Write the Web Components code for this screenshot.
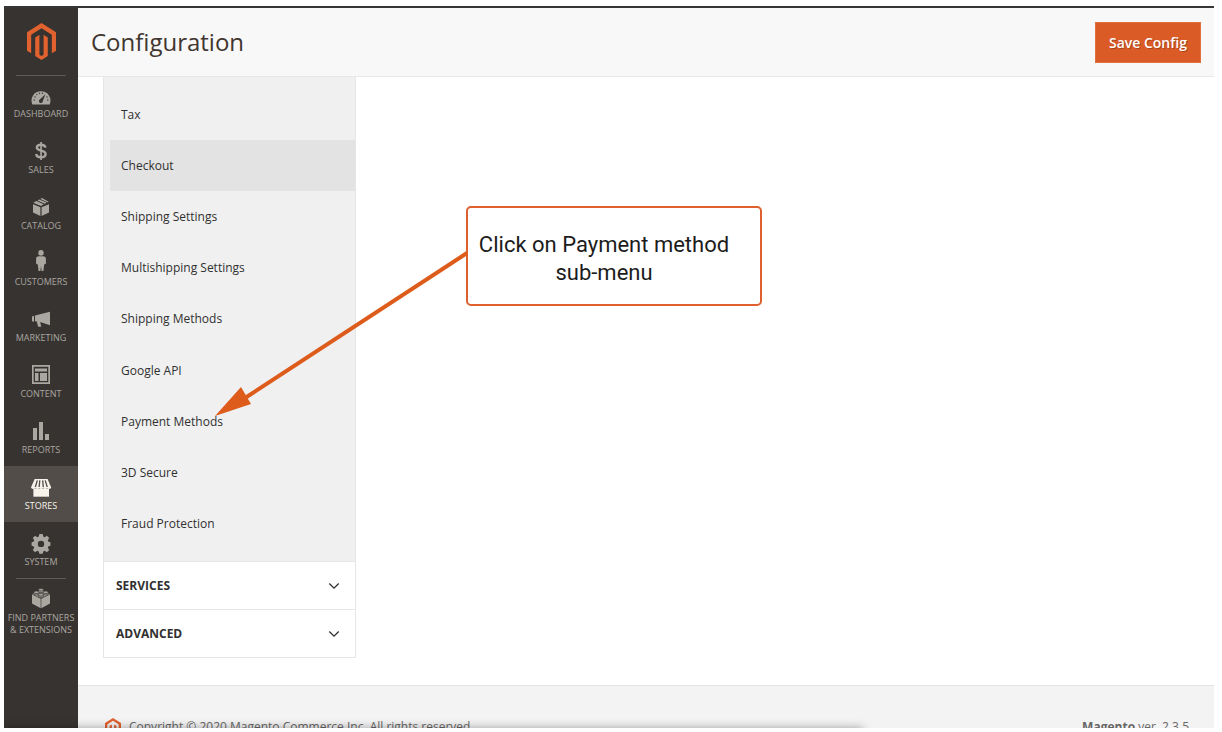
<!DOCTYPE html>
<html lang="en">
<head>
<meta charset="utf-8">
<title>Configuration / Magento Admin</title>
<style>
  body {
    margin: 0;
    background: #fff;
    font-family: "Open Sans", "Noto Sans", sans-serif;
    font-size: 12px;
    color: #303030;
  }
</style>
</head>
<body>
<admin-page>
  <side-bar slot="nav">
    <side-item icon="dashboard">Dashboard</side-item>
    <side-item icon="sales">Sales</side-item>
    <side-item icon="catalog">Catalog</side-item>
    <side-item icon="customers">Customers</side-item>
    <side-item icon="marketing">Marketing</side-item>
    <side-item icon="content">Content</side-item>
    <side-item icon="reports">Reports</side-item>
    <side-item icon="stores" active>Stores</side-item>
    <side-item icon="system">System</side-item>
    <side-item icon="partners" divided>Find Partners<br>&amp; Extensions</side-item>
  </side-bar>
  <page-header slot="header">Configuration</page-header>
  <config-menu>
    <config-link>Tax</config-link>
    <config-link active>Checkout</config-link>
    <config-link>Shipping Settings</config-link>
    <config-link>Multishipping Settings</config-link>
    <config-link>Shipping Methods</config-link>
    <config-link>Google API</config-link>
    <config-link>Payment Methods</config-link>
    <config-link>3D Secure</config-link>
    <config-link>Fraud Protection</config-link>
    <config-section slot="sections">Services</config-section>
    <config-section slot="sections">Advanced</config-section>
  </config-menu>
  <call-out slot="over">Click on Payment method sub-menu</call-out>
  <page-footer slot="footer"></page-footer>
</admin-page>

<script>
const LOGO = `<svg class="logo" viewBox="1.6 0 20.8 24" preserveAspectRatio="none" fill="currentColor" aria-hidden="true">
  <path d="M12 0l10.400 6v12l-3 1.700v-12L12 3.400 4.600 7.700v12l-3-1.700V6z"/>
  <path d="M10.500 7.700v12.900l1.500.8 1.500-.8V7.700l3 1.700v12L12 24l-4.500-2.600v-12z"/>
</svg>`;

const ICONS = {
  dashboard: `<path d="M1.300 19.500A9.500 9.500 0 1 1 18.700 19.500z"/>
    <g fill="#373330"><circle cx="3.200" cy="15" r=".7"/><circle cx="4" cy="12" r=".7"/><circle cx="5.900" cy="9.600" r=".7"/><circle cx="8.500" cy="8.200" r=".7"/><circle cx="11.400" cy="8.200" r=".7"/><circle cx="16" cy="12" r=".7"/><circle cx="16.800" cy="15" r=".7"/>
    <path d="M14.500 9.200l-2.600 6.600a2 2 0 1 1-2.900-1.600z"/></g>`,
  sales: `<path d="M14.400 6.600c-.3-2-1.800-2.900-4.400-2.900s-4.200 1.100-4.200 2.900c0 4 8.800 2.200 8.800 6.500 0 2-1.800 3.200-4.600 3.200s-4.500-1.100-4.800-3.300" fill="none" stroke="currentColor" stroke-width="2.400"/>
    <path d="M9.200 1h1.700v18H9.200z"/>`,
  catalog: `<path d="M2 7.200l7.400 3.100V19L2 15.400zM18 7.200l-7.400 3.100V19l7.400-3.600zM2.400 5.800l2.900-1.700 7.400 3.200L10 9.100zM6.500 3.500l1.600-1 7.500 3.100-1.700 1.100zM9.300 1.900L11 1l6.700 3.700-1.200.5z"/>`,
  customers: `<g transform="translate(0 -3)"><ellipse cx="10" cy="2.900" rx="2.700" ry="2.900"/>
    <path d="M8 6.300h4c2 0 2.900 1 2.900 2.600v4.800l-1.700.8-.8 6.500h-1.800l-.6-5-.6 5H7.600l-.8-6.500-1.700-.8V8.900C5.100 7.300 6 6.300 8 6.300z"/></g>`,
  marketing: `<path d="M1 7.400l2-.6v6l-2-.6zM4 6.500L19 2.800v13.400L9.200 13l1 4.800H7.100L5.800 12.600 4 12.300z"/>`,
  content: `<g transform="translate(0 -1)"><path fill-rule="evenodd" d="M1 1h18v19H1zM2.700 2.800v15.400h14.600V2.800z"/>
    <path d="M4 4.600h12v3H4zM4 9h3.500v8H4zM9 9h7v8H9z"/></g>`,
  reports: `<path d="M2 7h4v12H2zM8 1h4v18H8zM14 13h4v6h-4z"/>`,
  stores: `<g transform="translate(0 1)"><path d="M2.400 10.500h15.600v8.200H2.400z"/><path d="M3.700 1h12.900l3.600 8.500H0z"/>
    <path d="M6.300 2.400L4.200 9.500M8.800 2.400L8.100 9.500M11.700 2.400l.6 7.100M14.200 2.400l2.200 7.100" stroke="#524d48" stroke-width="1.300"/>
    <path d="M0 9h4.400a2.200 2 0 0 1-4.400 0M4.200 9h4a2 2 0 0 1-4 0M8.100 9h4a2 2 0 0 1-4 0M12.100 9h4a2 2 0 0 1-4 0M16 9h4.200a2.100 2 0 0 1-4.200 0"/></g>`,
  system: `<path fill-rule="evenodd" d="M8.300 1h3.400l.5 2.500 1.500.7 2.200-1.400 2.300 2.300-1.400 2.200.7 1.500 1.900.5v3.400l-1.900.5-.7 1.500 1.400 2.200-2.300 2.300-2.200-1.400-1.500.7-.5 2.300H8.300l-.5-2.300-1.500-.7-2.200 1.400-2.300-2.300 1.400-2.200-.7-1.500L.6 12.700V9.300l1.900-.5.7-1.500-1.400-2.200 2.300-2.300 2.200 1.400 1.500-.7zM10 7.700a3.200 3.200 0 1 0 0 6.400 3.200 3.200 0 0 0 0-6.400z"/>`,
  partners: `<g transform="translate(0 -1)"><path d="M1 6.500l8.700 4.300v9.500L1 15.500zM19 6.500l-8.700 4.300v9.500l8.700-4.800z"/><path d="M1.300 5.900L10 1.700l8.700 4.200L10 10.200z"/>
    <g stroke="#373330" stroke-width=".7"><path d="M7.400 1.900v1.500c0 1.500 5.200 1.500 5.200 0V1.900M2.800 4.500v1.300c0 1.500 5 1.500 5 0V4.500M12.200 4.500v1.300c0 1.500 5 1.500 5 0V4.500M7.400 7v1.300c0 1.500 5.200 1.500 5.200 0V7"/>
    <ellipse cx="10" cy="1.800" rx="2.600" ry="1.300"/><ellipse cx="5.300" cy="4.300" rx="2.500" ry="1.300"/><ellipse cx="14.700" cy="4.300" rx="2.500" ry="1.300"/><ellipse cx="10" cy="6.800" rx="2.600" ry="1.300"/></g></g>`
};

class AdminPage extends HTMLElement {
  constructor() {
    super();
    this.attachShadow({ mode: 'open' });
    this.shadowRoot.innerHTML = `
      <style>
        :host {
          display: block;
          box-sizing: border-box;
          height: 100vh;
          padding: 6px 8px 4px 4px;
        }
        .frame {
          position: relative;
          box-sizing: border-box;
          display: flex;
          height: 100%;
          overflow: hidden;
          border-top: 2px solid #373737;
        }
        .page {
          flex: 1;
          min-width: 0;
          display: flex;
          flex-direction: column;
        }
        main { padding: 0 25px 27px; }
        .dock {
          position: absolute;
          bottom: -12px;
          left: 0;
          width: 71%;
          height: 12px;
          box-shadow: 0 0 10px rgba(0, 0, 0, 0.35);
        }
      </style>
      <div class="frame">
        <slot name="nav"></slot>
        <div class="page">
          <slot name="header"></slot>
          <main><slot></slot></main>
          <slot name="footer"></slot>
        </div>
        <div class="dock"></div>
        <slot name="over"></slot>
      </div>
    `;
  }
}

class SideBar extends HTMLElement {
  constructor() {
    super();
    this.attachShadow({ mode: 'open' });
    this.shadowRoot.innerHTML = `
      <style>
        :host {
          display: block;
          flex: none;
          width: 74px;
          background: #373330;
        }
        .home {
          display: flex;
          justify-content: center;
          box-sizing: border-box;
          height: 68px;
          margin: 0 12px -2px;
          padding-top: 15px;
          border-bottom: 1px solid #5f5b57;
          color: #e2622f;
        }
        .logo { width: 29px; height: 37px; }
      </style>
      <a class="home" href="#" aria-label="Magento Admin">${LOGO}</a>
      <nav><slot></slot></nav>
    `;
  }
}

class SideItem extends HTMLElement {
  constructor() {
    super();
    this.attachShadow({ mode: 'open' });
    this.shadowRoot.innerHTML = `
      <style>
        :host { display: block; color: #aaa6a0; }
        :host([active]) { background: #524d48; color: #f7f3eb; }
        :host([divided])::before {
          content: "";
          display: block;
          height: 1px;
          margin: 0 12px -1px;
          background: #5f5b57;
        }
        a {
          display: flex;
          flex-direction: column;
          align-items: center;
          box-sizing: border-box;
          min-height: 56px;
          padding-top: 11px;
          gap: 3px;
          color: inherit;
          font-size: 9px;
          line-height: 12px;
          text-align: center;
          text-decoration: none;
          text-transform: uppercase;
          white-space: nowrap;
        }
        svg { width: 20px; height: 20px; overflow: visible; }
      </style>
      <a href="#">
        <svg viewBox="0 0 20 20" fill="currentColor" aria-hidden="true">${ICONS[this.getAttribute('icon')]}</svg>
        <span><slot></slot></span>
      </a>
    `;
  }
}

class PageHeader extends HTMLElement {
  constructor() {
    super();
    this.attachShadow({ mode: 'open' });
    this.shadowRoot.innerHTML = `
      <style>
        :host {
          display: flex;
          flex: none;
          justify-content: space-between;
          align-items: center;
          box-sizing: border-box;
          height: 69px;
          padding: 0 13px;
          background: #f8f8f8;
          border-bottom: 1px solid #e8e8e8;
        }
        h1 {
          margin: 0;
          color: #41362f;
          font-size: 24px;
          font-weight: 400;
          line-height: 32px;
        }
        button {
          height: 41px;
          padding: 0 13px;
          border: 1px solid #e2703f;
          background: #db5b26;
          color: #fff;
          font: 600 14px "Open Sans", sans-serif;
          text-shadow: 1px 1px 0 rgba(0, 0, 0, 0.25);
        }
      </style>
      <h1><slot></slot></h1>
      <button type="button">Save Config</button>
    `;
  }
}

class ConfigMenu extends HTMLElement {
  constructor() {
    super();
    this.attachShadow({ mode: 'open' });
    this.shadowRoot.innerHTML = `
      <style>
        :host {
          display: block;
          box-sizing: border-box;
          width: 253px;
          border: solid #e6e6e6;
          border-width: 0 1px 1px;
        }
        nav {
          display: grid;
          grid-auto-rows: 1fr;
          box-sizing: border-box;
          height: 484px;
          padding: 12px 0 11px 6px;
          background: #f0f0f0;
        }
      </style>
      <nav><slot></slot></nav>
      <slot name="sections"></slot>
    `;
  }
}

class ConfigLink extends HTMLElement {
  constructor() {
    super();
    this.attachShadow({ mode: 'open' });
    this.shadowRoot.innerHTML = `
      <style>
        :host { display: grid; }
        :host([active]) { background: #e3e3e3; }
        a {
          display: flex;
          align-items: center;
          padding-left: 11px;
          color: inherit;
          line-height: 16px;
          text-decoration: none;
        }
      </style>
      <a href="#"><slot></slot></a>
    `;
  }
}

class ConfigSection extends HTMLElement {
  constructor() {
    super();
    this.attachShadow({ mode: 'open' });
    this.shadowRoot.innerHTML = `
      <style>
        :host { display: block; border-top: 1px solid #e6e6e6; }
        button {
          display: flex;
          justify-content: space-between;
          align-items: center;
          width: 100%;
          height: 47px;
          padding: 0 16px 0 12px;
          border: 0;
          background: #fff;
          color: inherit;
          font: 700 12px "Open Sans", sans-serif;
          text-transform: uppercase;
        }
        svg { width: 10px; height: 6px; overflow: visible; }
      </style>
      <button type="button" aria-expanded="false">
        <slot></slot>
        <svg viewBox="0 0 10 6" fill="none" stroke="currentColor" stroke-width="1.300" aria-hidden="true"><path d="M.3.500L5 5.200 9.700.500"/></svg>
      </button>
    `;
  }
}

class PageFooter extends HTMLElement {
  constructor() {
    super();
    this.attachShadow({ mode: 'open' });
    this.shadowRoot.innerHTML = `
      <style>
        :host {
          display: flex;
          flex: none;
          justify-content: space-between;
          align-items: flex-start;
          box-sizing: border-box;
          padding: 32px 25px 24px 27px;
          background: #f3f3f3;
          border-top: 1px solid #e3e3e3;
          color: #666;
          line-height: 18px;
        }
        p { display: flex; gap: 8px; margin: 0; }
        .logo { width: 16px; height: 20px; color: #e2622f; }
      </style>
      <p>${LOGO}<span>Copyright © 2020 Magento Commerce Inc. All rights reserved.</span></p>
      <div><strong>Magento</strong> ver. 2.3.5</div>
    `;
  }
}

// Tutorial note laid over the page, with an arrow to the menu entry
class CallOut extends HTMLElement {
  constructor() {
    super();
    this.attachShadow({ mode: 'open' });
    this.shadowRoot.innerHTML = `
      <style>
        :host {
          position: absolute;
          top: 198px;
          left: 462px;
          box-sizing: border-box;
          width: 296px;
          height: 100px;
          padding: 23px 28px 0 8px;
          border: 2px solid #df602c;
          border-radius: 5px;
          background: #fff;
          color: #1c1c1c;
          font: 22px/28px Roboto, sans-serif;
          text-align: center;
        }
        svg {
          position: absolute;
          top: 42px;
          left: -253px;
          width: 254px;
          height: 168px;
        }
      </style>
      <slot></slot>
      <svg viewBox="0 0 254 168" fill="#dd5c1c" aria-hidden="true">
        <path d="M252 3L30 148" stroke="#dd5c1c" stroke-width="4"/>
        <path d="M0 166l26-29 10 17z"/>
      </svg>
    `;
  }
}

customElements.define('admin-page', AdminPage);
customElements.define('side-bar', SideBar);
customElements.define('side-item', SideItem);
customElements.define('page-header', PageHeader);
customElements.define('config-menu', ConfigMenu);
customElements.define('config-link', ConfigLink);
customElements.define('config-section', ConfigSection);
customElements.define('page-footer', PageFooter);
customElements.define('call-out', CallOut);
</script>
</body>
</html>
